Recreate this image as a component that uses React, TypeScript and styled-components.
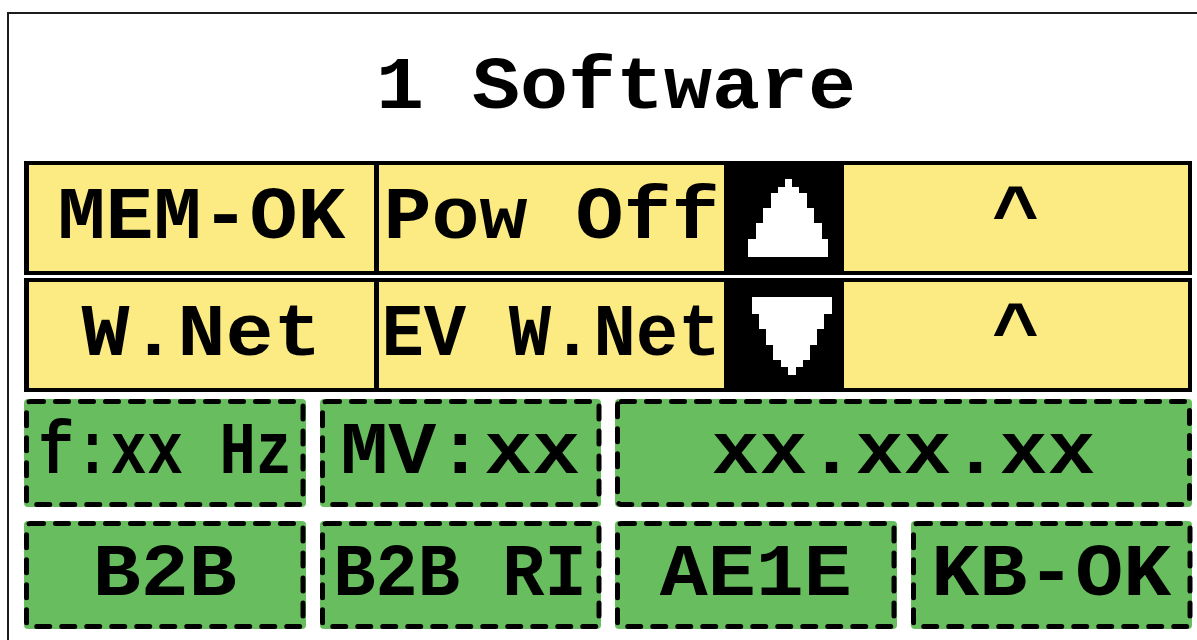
import React from "react";
import styled, { createGlobalStyle } from "styled-components";

const GlobalStyle = createGlobalStyle`
  html, body {
    margin: 0;
    padding: 0;
    background: #ffffff;
    overflow: hidden;
  }
  body {
    font-family: "Courier New", "Liberation Mono", monospace;
  }
`;

const YELLOW = "#FBEB82";
const GREEN = "#68BE5F";
const FONT = `"Courier New", "Nimbus Mono PS", "FreeMono", "Liberation Mono", monospace`;

const Frame = styled.div`
  margin: 12px 0 0 7px;
  width: 1190px;
  height: 628px;
  box-sizing: border-box;
  border-top: 2px solid #1c1c1c;
  border-left: 2px solid #1c1c1c;
  padding: 0 0 0 15px;
  display: flex;
  flex-direction: column;
`;

const Content = styled.div`
  width: 1168px;
  display: flex;
  flex-direction: column;
`;

const Title = styled.h1`
  margin: 0;
  height: 147px;
  padding-left: 16px;
  display: flex;
  align-items: center;
  justify-content: center;
  font: bold 80px/1 ${FONT};
  color: #000;
  white-space: pre;
`;

const StatusRows = styled.div`
  display: flex;
  flex-direction: column;
  gap: 3px;
`;

const StatusRow = styled.div`
  display: flex;
  height: 114px;
  box-sizing: border-box;
  border: 4px solid #000;
  border-left-width: 5px;
  background: #000;
`;

const StatusCell = styled.div<{ $w: number; $ml?: number }>`
  width: ${(p) => p.$w}px;
  margin-left: ${(p) => p.$ml ?? 0}px;
  flex: none;
  background: ${YELLOW};
  display: flex;
  align-items: center;
  justify-content: center;
  overflow: visible;
  font: bold 80px/1 ${FONT};
  color: #000;
`;

const ArrowCell = styled.div`
  width: 120px;
  flex: none;
  background: #000;
  display: flex;
`;

const Label = styled.span<{ $sx?: number }>`
  position: relative;
  display: inline-block;
  white-space: pre;
  transform: scale(${(p) => p.$sx ?? 1}, 0.93);
  transform-origin: center;
`;

const InfoGrid = styled.div`
  margin-top: 7px;
  display: grid;
  grid-template-columns: repeat(4, minmax(0, 1fr));
  grid-auto-rows: 108px;
  column-gap: 14px;
  row-gap: 14px;
`;

const InfoBox = styled.div<{ $span?: number }>`
  position: relative;
  grid-column: span ${(p) => p.$span ?? 1};
  min-width: 0;
  background: ${GREEN};
  border-radius: 4px;
  display: flex;
  align-items: center;
  justify-content: center;
  overflow: visible;
  font: bold 80px/1 ${FONT};
  color: #000;
`;

const DashOutline = styled.svg`
  position: absolute;
  inset: 0;
  width: 100%;
  height: 100%;
  overflow: visible;
  pointer-events: none;

  rect {
    x: 2.5px;
    y: 2.5px;
    width: calc(100% - 5px);
    height: calc(100% - 5px);
    fill: none;
    stroke: #000;
    stroke-width: 5px;
    stroke-dasharray: 13 12;
    stroke-linecap: round;
  }
`;

const Box = ({ span, children }: { span?: number; children: React.ReactNode }) => (
  <InfoBox $span={span}>
    <DashOutline aria-hidden="true">
      <rect rx="4" ry="4" />
    </DashOutline>
    {children}
  </InfoBox>
);

const UpTriangle = () => (
  <svg width="120" height="106" viewBox="0 0 120 106" shapeRendering="crispEdges">
    <path
      d="M61 14H68V22H75V28H83V43H90V58H98V74H104V92H24V74H32V58H39V43H47V28H54V22H61Z"
      fill="#fff"
    />
  </svg>
);

const DownTriangle = () => (
  <svg width="120" height="106" viewBox="0 0 120 106" shapeRendering="crispEdges">
    <path
      d="M28 15H108V32H100V47H93V63H86V78H79V85H72V93H64V85H57V78H49V63H42V47H35V32H28Z"
      fill="#fff"
    />
  </svg>
);

export default function App() {
  return (
    <>
      <GlobalStyle />
      <Frame>
        <Content>
          <Title>
            <Label>1 Software</Label>
          </Title>
          <StatusRows>
            <StatusRow>
              <StatusCell $w={345}>
                <Label>MEM-OK</Label>
              </StatusCell>
              <StatusCell $w={345} $ml={5}>
                <Label>Pow Off</Label>
              </StatusCell>
              <ArrowCell>
                <UpTriangle />
              </ArrowCell>
              <StatusCell $w={344}>
                <Label>^</Label>
              </StatusCell>
            </StatusRow>
            <StatusRow>
              <StatusCell $w={345}>
                <Label>W.Net</Label>
              </StatusCell>
              <StatusCell $w={345} $ml={5}>
                <Label $sx={0.883}>EV W.Net</Label>
              </StatusCell>
              <ArrowCell>
                <DownTriangle />
              </ArrowCell>
              <StatusCell $w={344}>
                <Label>^</Label>
              </StatusCell>
            </StatusRow>
          </StatusRows>
          <InfoGrid>
            <Box>
              <Label $sx={0.756}>f:xx Hz</Label>
            </Box>
            <Box>
              <Label>MV:xx</Label>
            </Box>
            <Box span={2}>
              <Label>xx.xx.xx</Label>
            </Box>
            <Box>
              <Label>B2B</Label>
            </Box>
            <Box>
              <Label $sx={0.88}>B2B RI</Label>
            </Box>
            <Box>
              <Label>AE1E</Label>
            </Box>
            <Box>
              <Label>KB-OK</Label>
            </Box>
          </InfoGrid>
        </Content>
      </Frame>
    </>
  );
}
